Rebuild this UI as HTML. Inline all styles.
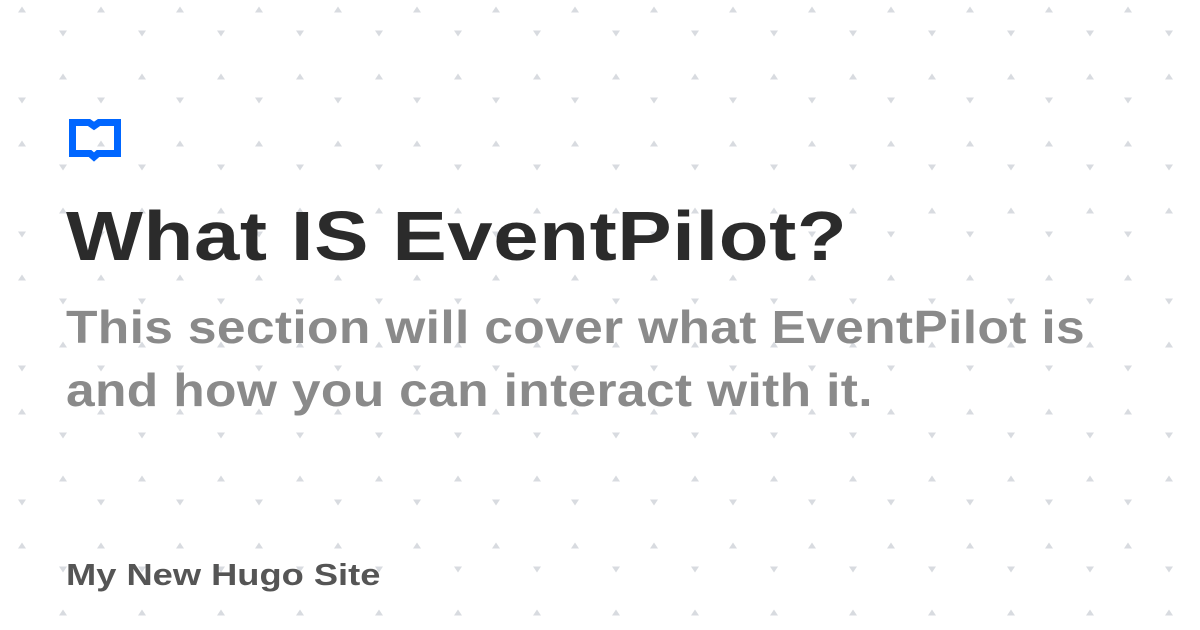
<!DOCTYPE html>
<html><head><meta charset="utf-8"><style>
html,body{margin:0;padding:0}
body{width:1200px;height:630px;position:relative;background:#fff;overflow:hidden;font-family:"Liberation Sans",sans-serif;font-weight:bold}
svg.bg{position:absolute;left:0;top:0}
.t{position:absolute;left:66px;white-space:nowrap;transform-origin:0 0}
#h{top:196px;font-size:70px;color:#2b2b2b;letter-spacing:0.5px;transform:scaleX(1.165)}
#s{top:296px;font-size:46px;color:#8a8a8a;line-height:63px;letter-spacing:0.3px;transform:scaleX(1.12)}
#f{top:557px;font-size:31px;color:#555;transform:scaleX(1.17)}
</style></head><body>
<svg class="bg" width="1200" height="630">
<defs><pattern id="p" x="0" y="0" width="79" height="134" patternUnits="userSpaceOnUse">
<path d="M22 6.5l4 6h-8z" fill="#d8dbe0"/>
<path d="M59 30.5h8l-4 6z" fill="#d8dbe0"/>
<path d="M63 73.5l4 6h-8z" fill="#d8dbe0"/>
<path d="M18 97.5h8l-4 6z" fill="#d8dbe0"/>
</pattern></defs>
<rect width="1200" height="630" fill="url(#p)"/>
<path d="M72.5 122.5H89L94 126L99 122.5H117.5V153.5H98L94 157L90 153.5H72.5Z" fill="none" stroke="#0066ff" stroke-width="7" stroke-linejoin="miter"/>
</svg>
<div class="t" id="h">What IS EventPilot?</div>
<div class="t" id="s">This section will cover what EventPilot is<br>and how you can interact with it.</div>
<div class="t" id="f">My New Hugo Site</div>
</body></html>
